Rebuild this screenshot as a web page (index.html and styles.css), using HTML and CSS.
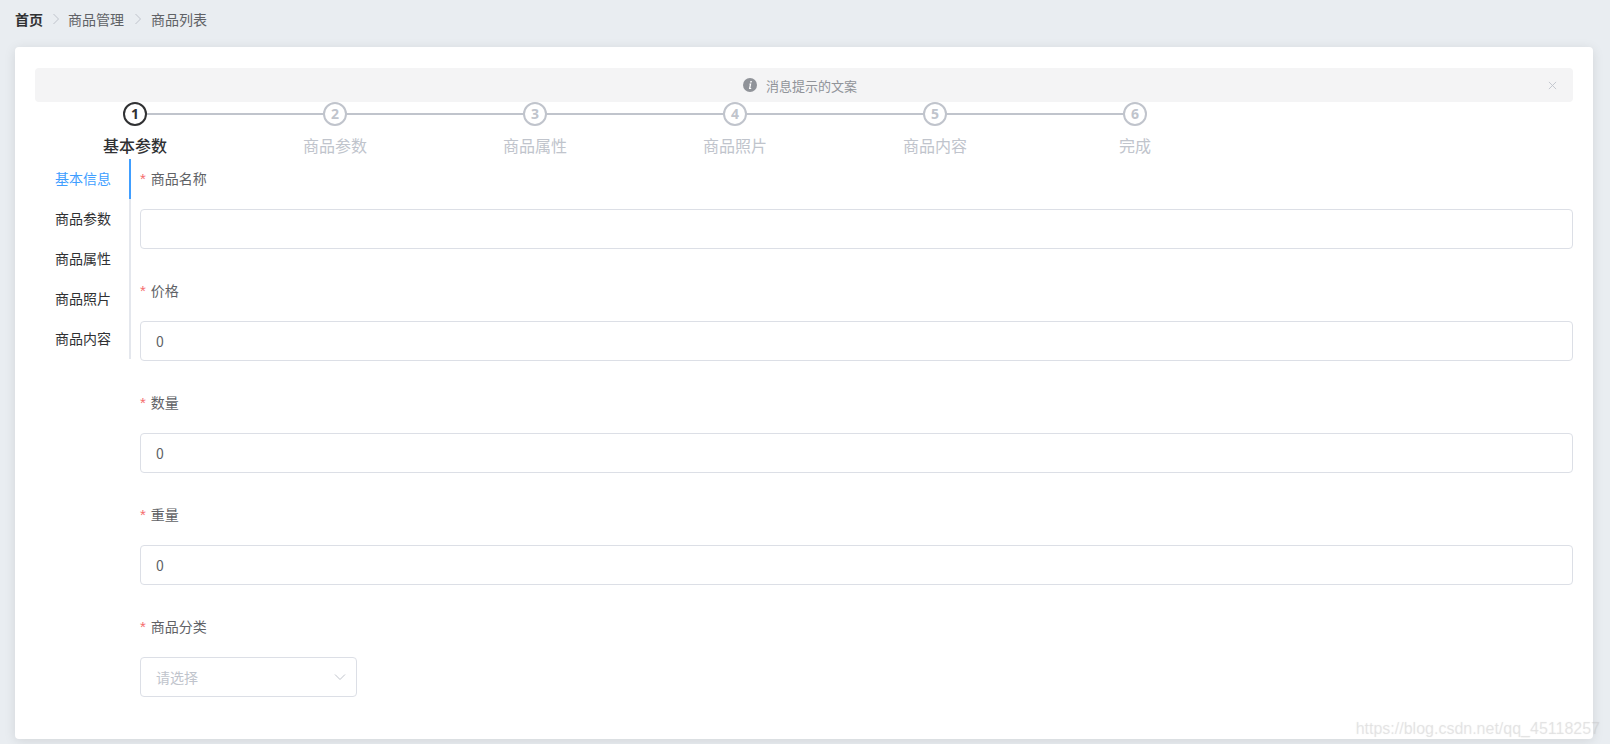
FILE: index.html
```html
<!DOCTYPE html>
<html lang="zh-CN">
<head>
    <meta charset="UTF-8">
    <meta name="viewport" content="width=device-width, initial-scale=1.0">
    <title>添加商品</title>
    <link rel="stylesheet" href="styles.css">
</head>
<body>
    <div class="breadcrumb">
        <span class="crumb crumb-home">首页</span>
        <svg class="crumb-sep" viewBox="0 0 8 12"><path d="M1.5 1l5 5-5 5" fill="none" stroke="#c0c4cc" stroke-width="1"/></svg>
        <span class="crumb">商品管理</span>
        <svg class="crumb-sep crumb-sep-wide" viewBox="0 0 8 12"><path d="M1.5 1l5 5-5 5" fill="none" stroke="#c0c4cc" stroke-width="1"/></svg>
        <span class="crumb">商品列表</span>
    </div>

    <div class="card">
        <div class="alert">
            <div class="alert-content">
                <svg class="alert-icon" viewBox="0 0 14 14">
                    <circle cx="7" cy="7" r="7" fill="#909399"/>
                    <path d="M7.4 2.9h1.5l-.3 1.5H7.1zM6.6 5.6h1.7L7.4 10h.9l-.2.9H5.9l.9-4.4h-.5z" fill="#fff"/>
                </svg>
                <span>消息提示的文案</span>
            </div>
            <svg class="alert-close" viewBox="0 0 10 10"><path d="M1 1l8 8M9 1l-8 8" fill="none" stroke="#c0c4cc" stroke-width="1"/></svg>
        </div>

        <div class="steps">
            <div class="step active">
                <div class="step-head"><div class="step-icon">1</div></div>
                <div class="step-title">基本参数</div>
            </div>
            <div class="step">
                <div class="step-head"><div class="step-icon">2</div></div>
                <div class="step-title">商品参数</div>
            </div>
            <div class="step">
                <div class="step-head"><div class="step-icon">3</div></div>
                <div class="step-title">商品属性</div>
            </div>
            <div class="step">
                <div class="step-head"><div class="step-icon">4</div></div>
                <div class="step-title">商品照片</div>
            </div>
            <div class="step">
                <div class="step-head"><div class="step-icon">5</div></div>
                <div class="step-title">商品内容</div>
            </div>
            <div class="step step-last">
                <div class="step-head"><div class="step-icon">6</div></div>
                <div class="step-title">完成</div>
            </div>
        </div>

        <div class="tabs">
            <div class="tabs-nav">
                <div class="tab active">基本信息</div>
                <div class="tab">商品参数</div>
                <div class="tab">商品属性</div>
                <div class="tab">商品照片</div>
                <div class="tab">商品内容</div>
            </div>
            <form class="form">
                <div class="form-item">
                    <label class="form-label">商品名称</label>
                    <input class="form-input" type="text" value="">
                </div>
                <div class="form-item">
                    <label class="form-label">价格</label>
                    <input class="form-input" type="text" value="0">
                </div>
                <div class="form-item">
                    <label class="form-label">数量</label>
                    <input class="form-input" type="text" value="0">
                </div>
                <div class="form-item">
                    <label class="form-label">重量</label>
                    <input class="form-input" type="text" value="0">
                </div>
                <div class="form-item">
                    <label class="form-label">商品分类</label>
                    <div class="select">
                        <span>请选择</span>
                        <svg class="select-arrow" viewBox="0 0 12 8"><path d="M1 1.5l5 5 5-5" fill="none" stroke="#c0c4cc" stroke-width="1"/></svg>
                    </div>
                </div>
            </form>
        </div>
    </div>

    <div class="watermark">https://blog.csdn.net/qq_45118257</div>
</body>
</html>
```
FILE: styles.css
```css
* {
    box-sizing: border-box;
}

html, body {
    height: 100%;
}

body {
    margin: 0;
    padding: 0 17px 5px 15px;
    background: #e9edf1;
    font-family: "Noto Sans CJK SC", "Liberation Sans", sans-serif;
    font-size: 14px;
    color: #606266;
    overflow: hidden;
    position: relative;
}

/* Breadcrumb */
.breadcrumb {
    height: 47px;
    padding-bottom: 9px;
    display: flex;
    align-items: center;
}

.crumb {
    font-size: 14px;
    line-height: 14px;
    color: #606266;
}

.crumb-home {
    color: #303133;
    font-weight: 700;
}

.crumb-sep {
    width: 8px;
    height: 12px;
    margin: 0 8.5px;
}

.crumb-sep-wide {
    margin: 0 9.5px;
}

/* Card */
.card {
    height: 692px;
    background: #fff;
    border-radius: 4px;
    padding: 21px 20px 0;
    box-shadow: 0 2px 12px rgba(0,0,0,0.1);
}

/* Alert */
.alert {
    height: 34px;
    padding-right: 8px;
    background: #f4f4f5;
    border-radius: 4px;
    display: flex;
    align-items: center;
    justify-content: center;
    position: relative;
    color: #909399;
    font-size: 13px;
}

.alert-content {
    display: flex;
    align-items: center;
    gap: 9px;
}

.alert-icon {
    width: 14px;
    height: 14px;
}

.alert-close {
    position: absolute;
    right: 16px;
    top: 13px;
    width: 9px;
    height: 9px;
}

/* Steps */
.steps {
    display: flex;
    width: 1200px;
    height: 57px;
}

.step {
    width: 200px;
    text-align: center;
    color: #c0c4cc;
}

.step-head {
    position: relative;
    height: 24px;
}

.step-head::after {
    content: "";
    position: absolute;
    left: 50%;
    width: 100%;
    top: 11px;
    height: 2px;
    background: #c0c4cc;
}

.step-last .step-head::after {
    display: none;
}

.step-icon {
    position: relative;
    z-index: 1;
    width: 24px;
    height: 24px;
    margin: 0 auto;
    border: 2px solid #c0c4cc;
    border-radius: 50%;
    background: #fff;
    font-family: "Open Sans", "Liberation Sans", sans-serif;
    font-size: 14px;
    font-weight: 700;
    line-height: 20px;
}

.step-title {
    margin-top: 7px;
    font-size: 16px;
    line-height: 24px;
}

.step.active {
    color: #303133;
}

.step.active .step-icon {
    border-color: #303133;
}

.step.active .step-title {
    font-weight: 500;
}

/* Tabs */
.tabs {
    display: flex;
}

.tabs-nav {
    width: 96px;
    height: 200px;
    flex-shrink: 0;
    border-right: 2px solid #e4e7ed;
}

.tab {
    height: 40px;
    line-height: 38px;
    padding-right: 18px;
    text-align: right;
    color: #303133;
    margin-right: -2px;
    border-right: 2px solid transparent;
}

.tab.active {
    color: #409eff;
    border-right-color: #409eff;
}

/* Form */
.form {
    flex: 1;
    margin-left: 9px;
}

.form-item {
    margin-bottom: 22px;
}

.form-label {
    display: block;
    height: 40px;
    line-height: 38px;
    margin-bottom: 10px;
    color: #606266;
}

.form-label::before {
    content: "*";
    font-family: "Liberation Sans", sans-serif;
    font-size: 15px;
    color: #f56c6c;
    margin-right: 5px;
}

.form-input {
    display: block;
    width: 100%;
    height: 40px;
    padding: 0 15px;
    border: 1px solid #dcdfe6;
    border-radius: 4px;
    background: #fff;
    font-family: inherit;
    font-size: 14px;
    color: #606266;
    outline: none;
}

.select {
    width: 217px;
    height: 40px;
    padding: 0 15px;
    border: 1px solid #dcdfe6;
    border-radius: 4px;
    display: flex;
    align-items: center;
    justify-content: space-between;
    color: #c0c4cc;
}

.select-arrow {
    width: 12px;
    height: 8px;
    margin-right: -5px;
}

/* Watermark */
.watermark {
    position: absolute;
    right: 10px;
    bottom: 6px;
    font-family: "Liberation Sans", sans-serif;
    font-size: 16px;
    color: rgba(190,190,190,0.22);
    text-shadow: 0 0 1px rgba(190,190,190,0.3);
}
```
